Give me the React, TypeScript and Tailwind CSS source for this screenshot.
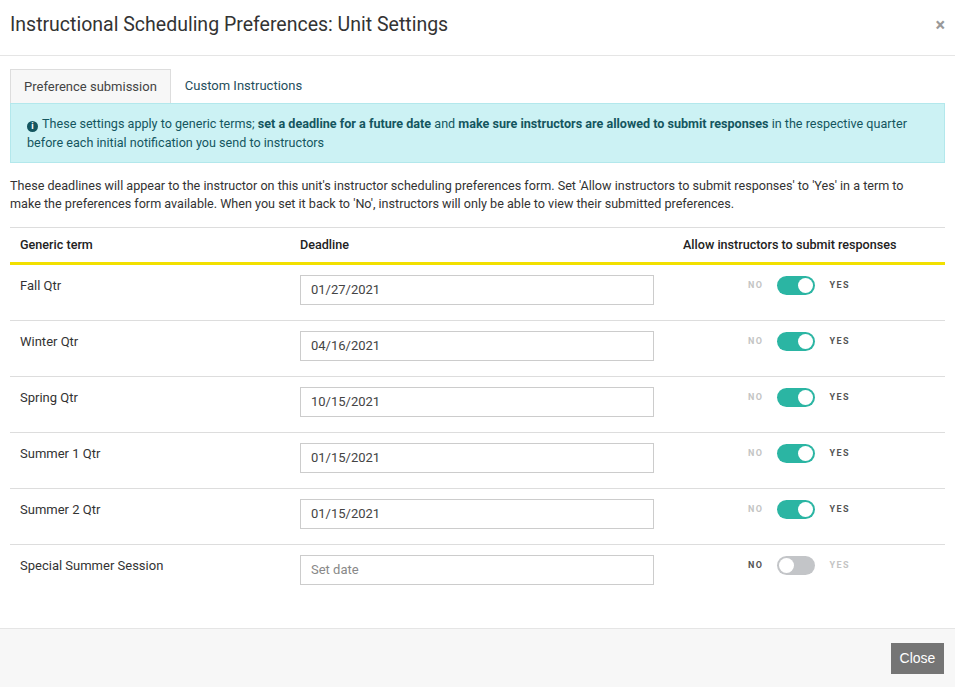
import React from "react";

const rows = [
  { t: "Fall Qtr", d: "01/27/2021", on: true },
  { t: "Winter Qtr", d: "04/16/2021", on: true },
  { t: "Spring Qtr", d: "10/15/2021", on: true },
  { t: "Summer 1 Qtr", d: "01/15/2021", on: true },
  { t: "Summer 2 Qtr", d: "01/15/2021", on: true },
  { t: "Special Summer Session", d: "", on: false },
];

export default function App() {
  return (
    <div className="w-[955px] h-[687px] bg-white flex flex-col text-[#212529] overflow-hidden" style={{ fontFamily: "Roboto, 'Liberation Sans', sans-serif" }}>
      <div className="h-[56px] shrink-0 border-b border-[#e5e5e5] flex items-center justify-between pl-[10px] pr-[10px] pb-[6px]">
        <div className="text-[19.5px] text-[#333]">Instructional Scheduling Preferences: Unit Settings</div>
        <div className="text-[18px] font-bold text-[#999] leading-none">×</div>
      </div>
      <div className="flex-1 px-[10px] pt-[13px]">
        <div className="flex text-[13px]">
          <div className="h-[34px] px-[13px] flex items-center bg-[#f7f7f7] border border-[#ddd] border-b-0 text-[#444]">Preference submission</div>
          <div className="h-[34px] px-[14px] flex items-center text-[#1f4e5c]">Custom Instructions</div>
        </div>
        <div className="bg-[#ccf2f4] border border-[#b3e8ec] px-4 pt-[10px] pb-[10px] text-[12.6px] leading-[19px] text-[#14565f]">
          <span className="inline-flex w-[11px] h-[11px] rounded-full bg-[#14565f] text-white text-[9px] font-bold items-center justify-center align-[-1px] mr-1 leading-none">i</span>
          These settings apply to generic terms; <b className="font-bold">set a deadline for a future date</b> and <b className="font-bold">make sure instructors are allowed to submit responses</b> in the respective quarter before each initial notification you send to instructors
        </div>
        <p className="text-[12.6px] leading-[18px] text-[#333] mt-[14px] pr-4">
          These deadlines will appear to the instructor on this unit's instructor scheduling preferences form. Set 'Allow instructors to submit responses' to 'Yes' in a term to make the preferences form available. When you set it back to 'No', instructors will only be able to view their submitted preferences.
        </p>
        <div className="mt-[14px] border-t border-[#ddd]">
          <div className="h-[37px] flex items-center text-[12.6px] font-medium text-[#222] border-b-[3px] border-[#f2e000]">
            <div className="w-[290px] pl-[10px]">Generic term</div>
            <div className="w-[373px]">Deadline</div>
            <div className="flex-1 pl-[10px]">Allow instructors to submit responses</div>
          </div>
          {rows.map((r, i) => (
            <div key={i} className={`h-[56px] flex items-start text-[13px] ${i < rows.length - 1 ? "border-b border-[#ddd]" : ""}`}>
              <div className="w-[290px] pl-[10px] pt-[11px] text-[#333]">{r.t}</div>
              <div className="w-[373px] pt-[10px]">
                <div className={`w-[354px] h-[30px] border border-[#ccc] px-[10px] flex items-center ${r.d ? "text-[#444]" : "text-[#888]"}`}>{r.d || "Set date"}</div>
              </div>
              <div className="flex-1 pt-[11px] pr-[20px] flex items-center justify-center gap-[14px] text-[9px] font-bold tracking-[1.5px]">
                <span className={r.on ? "text-[#c4c4c4]" : "text-[#555]"}>NO</span>
                <span className={`w-[38px] h-[19px] rounded-full relative ${r.on ? "bg-[#2bb5a3]" : "bg-[#c3c5c8]"}`}>
                  <span className={`absolute top-[2px] w-[15px] h-[15px] rounded-full bg-white ${r.on ? "right-[2px]" : "left-[2px]"}`} />
                </span>
                <span className={r.on ? "text-[#555]" : "text-[#c4c4c4]"}>YES</span>
              </div>
            </div>
          ))}
        </div>
      </div>
      <div className="h-[59px] shrink-0 bg-[#f7f7f7] border-t border-[#e5e5e5] flex items-center justify-end pr-[11px]">
        <div className="w-[53px] h-[31px] bg-[#757575] text-white text-[14px] flex items-center justify-center" style={{ fontFamily: "'Liberation Sans', sans-serif" }}>Close</div>
      </div>
    </div>
  );
}
